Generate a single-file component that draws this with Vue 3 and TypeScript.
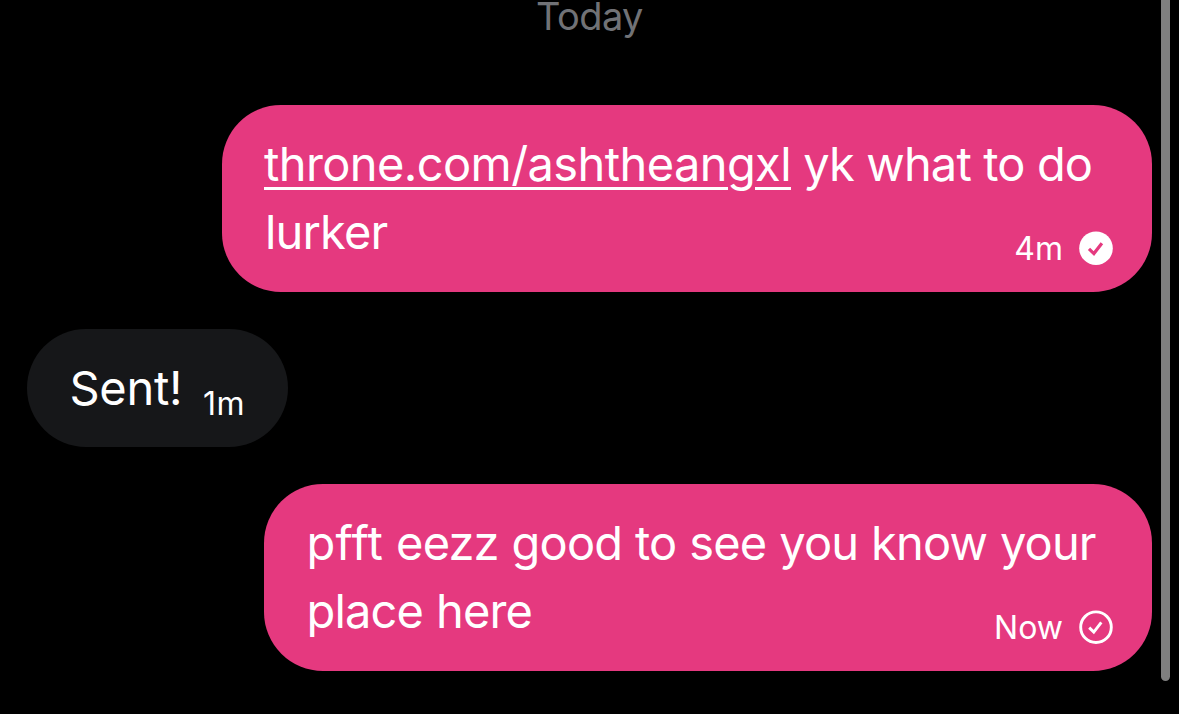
<script setup lang="ts">
interface Message {
  kind: string
  link?: string
  lines: string[]
  time: string
  status?: 'read' | 'sent'
}

const messages: Message[] = [
  { kind: 'out first', link: 'throne.com/ashtheangxl', lines: ['yk what to do', 'lurker'], time: '4m', status: 'read' },
  { kind: 'in', lines: ['Sent!'], time: '1m' },
  { kind: 'out last', lines: ['pfft eezz good to see you know your', 'place here'], time: 'Now', status: 'sent' },
]
</script>

<template>
  <main class="chat">
    <div class="day">Today</div>
    <div class="thread">
      <div v-for="m in messages" :key="m.time" class="bubble" :class="m.kind">
        <div class="body">
          <div v-for="(line, i) in m.lines" :key="line" class="line">
            <template v-if="m.link && i === 0"><span class="link">{{ m.link }}</span>{{ ' ' }}</template><template v-for="(word, w) in line.split(' ')" :key="w"><template v-if="w > 0">{{ ' ' }}</template><span :class="{ loose: word.includes('ff') }">{{ word }}</span></template>
          </div>
        </div>
        <div class="meta">
          <span class="time">{{ m.time }}</span>
          <svg v-if="m.status === 'read'" class="status" viewBox="0 0 34 34">
            <circle cx="17" cy="17.2" r="16.8" fill="#fff" />
            <path d="M10 17.9 14.9 22.6 22.9 12.2" fill="none" stroke="#e5397f" stroke-width="3.2" />
          </svg>
          <svg v-else-if="m.status === 'sent'" class="status" viewBox="0 0 34 34">
            <circle cx="17" cy="17.2" r="15.3" fill="none" stroke="#fff" stroke-width="2.9" />
            <path d="M10.2 17.6 14.8 22.1 22.3 12.4" fill="none" stroke="#fff" stroke-width="2.9" />
          </svg>
        </div>
      </div>
    </div>
    <div class="scrollbar"></div>
  </main>
</template>

<style>
body { background: #000; overflow: hidden; }
</style>

<style scoped>
.chat {
  position: relative;
  box-sizing: border-box;
  width: 1179px;
  height: 714px;
  overflow: hidden;
  background: #000;
  color: #fff;
  font-family: Inter, "Liberation Sans", sans-serif;
}
.day { height: 105px; line-height: 32px; text-align: center; font-size: 38px; letter-spacing: -0.6px; color: #717276; }
.thread { display: flex; flex-direction: column; gap: 37px; padding: 0 27px; }
.bubble { display: flex; justify-content: space-between; box-sizing: border-box; border-radius: 59px; white-space: nowrap; }
.out { align-self: flex-end; height: 187px; padding: 25px 39px 0 43px; background: #e5397f; }
.first { width: 930px; }
.last { width: 888px; }
.in { width: 261px; height: 118px; align-self: flex-start; padding: 25px 43px 0 43px; background: #161719; }
.body { width: 0; }
.line { height: 68px; line-height: 68px; font-size: 47px; letter-spacing: -0.85px; word-spacing: 0.5px; }
.first .line { word-spacing: -0.1px; }
.first .link { margin-left: -1px; letter-spacing: -0.6px; text-decoration: underline; text-decoration-thickness: 3px; text-underline-offset: 6px; }
.in .line { margin-left: -0.5px; letter-spacing: -0.3px; }
.last .line { margin-left: -0.5px; }
.line .loose { letter-spacing: 0.3px; }
.meta { display: flex; align-items: center; align-self: flex-end; gap: 16px; height: 34px; margin-bottom: 27px; font-size: 32px; }
.in .meta { letter-spacing: 0.5px; }
.status { width: 34px; height: 34px; overflow: visible; }
.scrollbar { position: absolute; top: -10px; right: 9px; width: 9px; height: 691px; border-radius: 5px; background: #7f7f7f; }
</style>
